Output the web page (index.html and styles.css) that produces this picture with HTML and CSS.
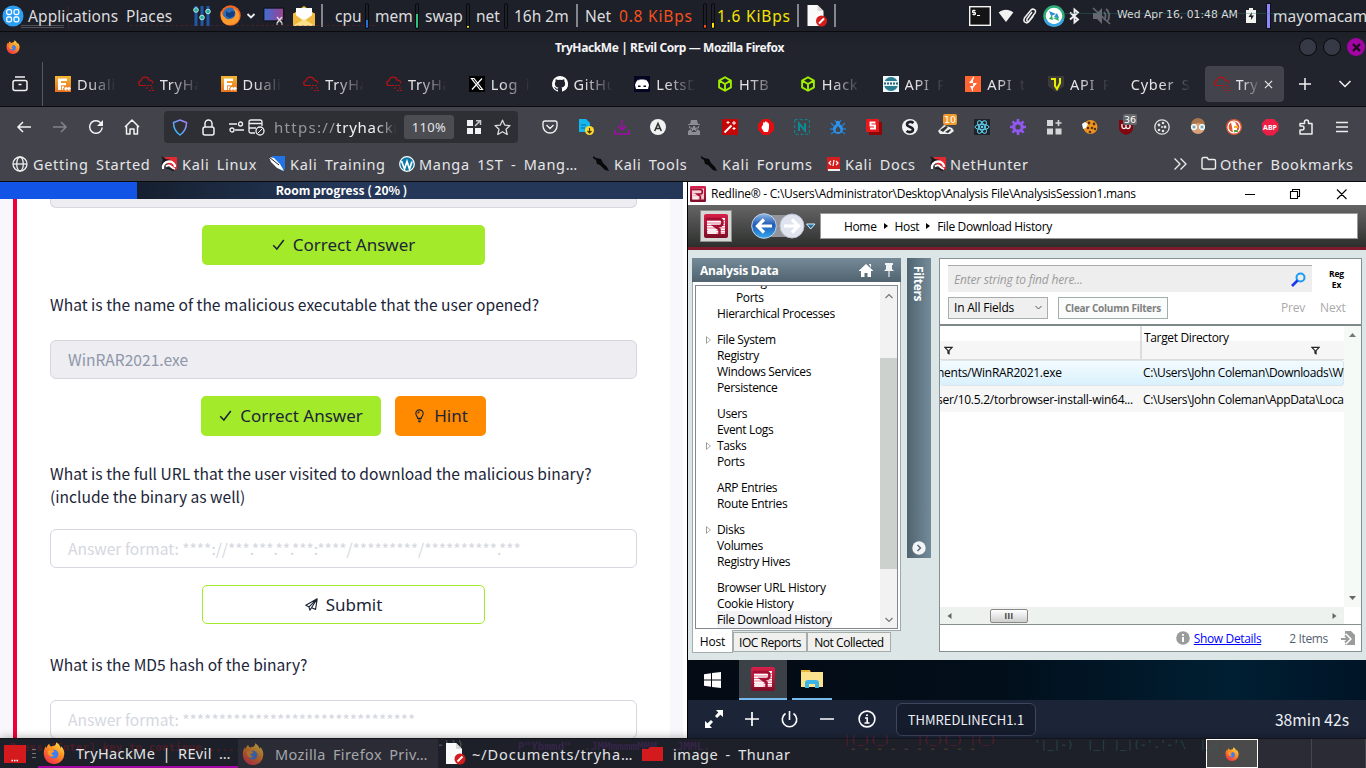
FILE: index.html
```html
<!DOCTYPE html>
<html lang="en">
<head>
<meta charset="utf-8">
<title>TryHackMe | REvil Corp — Mozilla Firefox</title>
<link rel="stylesheet" href="styles.css">
</head>
<body>
<svg class="defs" width="0" height="0">
  <defs>
    <linearGradient id="gFire" x1=".8" y1="0" x2=".2" y2="1"><stop offset="0" stop-color="#ffe14a"/><stop offset=".45" stop-color="#ff8a1f"/><stop offset="1" stop-color="#f2264d"/></linearGradient>
    <linearGradient id="gRed" x1="0" y1="0" x2="0" y2="1"><stop offset="0" stop-color="#d8204a"/><stop offset="1" stop-color="#7c0d26"/></linearGradient>
    <linearGradient id="gShield" x1="1" y1="0" x2="0" y2="1"><stop offset="0" stop-color="#b07cff"/><stop offset="1" stop-color="#22c3f5"/></linearGradient>
    <linearGradient id="gBlue" x1="0" y1="0" x2="0" y2="1"><stop offset="0" stop-color="#8fb6e6"/><stop offset=".45" stop-color="#1f5bb5"/><stop offset="1" stop-color="#35a8f0"/></linearGradient>
    <linearGradient id="gShot" x1="0" y1="0" x2="1" y2="0"><stop offset="0" stop-color="#3d6fd8"/><stop offset="1" stop-color="#a0408f"/></linearGradient>
    <linearGradient id="gOrange" x1="0" y1="0" x2="0" y2="1"><stop offset="0" stop-color="#f2b632"/><stop offset="1" stop-color="#e8701e"/></linearGradient>
  </defs>
  <symbol id="firefox" viewBox="0 0 16 16"><path fill="url(#gFire)" d="M8.6 2.6C9.4 1.8 9.6.9 9.5.2c2 1 3 2.600 3.200 4 .5-.2.6-.8.6-1.200C14.900 4.700 15.600 6.500 15.500 8.500a7.400 7.400 0 0 1-14.900.2C.500 6.500 1 4.600 2.100 3.100c.1.6.2.9.5 1.200C3 3 3.600 2 4.600 1.300c0 1 .5 1.700 1.400 2 .8-.1 1.700-.4 2.600-.7z"/><circle cx="8" cy="8.800" r="3.200" fill="#3e7df0"/><path fill="#ff9a2a" d="M3.500 6.500c1.500-1.500 3.500-.9 4.800.2-.6 1-1.500 1-2.200 1.400.2 1 1 1.800 2.300 1.700-1.800 1.600-4.900.8-4.900-3.300z"/></symbol>
  <symbol id="thm" viewBox="0 0 16 16"><path fill="none" stroke="#b31217" stroke-width="1.200" d="M8 9.500H3.200a2.300 2.300 0 0 1-.3-4.600C3.500 2.500 5.200 1.200 7.300 1.200c2 0 3.400 1.200 4 3 2 0 3.400 1.200 3.400 3"/><path stroke="#b31217" stroke-width="1.100" stroke-dasharray="2 1" d="M9 9.500h6M8 12h3M13 12h3M11 14.500h5"/></symbol>
  <symbol id="free" viewBox="0 0 16 16"><rect width="16" height="16" fill="url(#gOrange)"/><path fill="#fff" d="M3 2.500h9V5H6v2h5v2.300H6V14H3z"/><path fill="none" stroke="#fff" stroke-width="1.400" d="M7.500 14v-3h1.500M10 12.500h2a1 1 0 1 0-.5 1.200M13 12.500h2a1 1 0 1 0-.5 1.200"/></symbol>
  <symbol id="htb" viewBox="0 0 16 16"><path fill="none" stroke="#9fef00" stroke-width="1.900" stroke-linejoin="round" d="M8 1.200l5.900 3.400v6.800L8 14.800l-5.900-3.400V4.600zM2.200 4.700L8 8l5.800-3.300M8 8v6.500"/></symbol>
  <symbol id="kred" viewBox="0 0 16 16"><path fill="#e32a31" d="M4 1h12v12l-3 1L2 4z"/><path fill="#16181d" d="M0 0l5 3 5 1-6 3-3 5 1 3-2-3 1-6 1-2z"/><path fill="none" stroke="#fff" stroke-width="2.300" d="M2 13C1 9 4 5.500 8 5.500c4 0 6 3 6 5.500"/><path fill="none" stroke="#fff" stroke-width="1.800" d="M5 10.500c2-1.500 4-1 5 0s2 2 4 2.500"/><path fill="none" stroke="#16181d" stroke-width="1.500" d="M5 12.500c3-2 5 2 8 2"/></symbol>
  <symbol id="kblk" viewBox="0 0 16 16"><path fill="#08090b" d="M0 0l3 2 5 1 2 4 4 4 2 4-4-1-5-5-3-1-1-4-3-2z"/></symbol>
  <symbol id="R" viewBox="0 0 24 24"><rect width="24" height="24" rx="2" fill="url(#gRed)"/><path fill="#fff" d="M3 4h18v16H3z"/><path stroke="#e2607e" stroke-width=".9" d="M3 6.500h18M3 9h18M3 11.500h18M3 14h18M3 16.500h18M3 19h18"/><path fill="none" stroke="#a30f33" stroke-width="2.500" d="M2 5h13.500c4 0 4 7 0 7H10.500l5 3.500v5"/><path fill="#fbe9ed" d="M4 15.500h8.500V20H4z"/></symbol>
  <symbol id="check" viewBox="0 0 16 16"><path fill="none" stroke="#1c2538" stroke-width="1.900" d="M1.500 9l4.500 4.500 8.500-11"/></symbol>
  <symbol id="doc" viewBox="0 0 24 24"><path fill="#fafafa" d="M4 1h10l6 6v15H4z"/><path fill="#d9d9d9" d="M14 1l6 6h-6z"/><circle cx="18" cy="17" r="5.500" fill="#d41c1c"/><path stroke="#fff" stroke-width="2" d="M15.500 19.500l5-5"/></symbol>
  <symbol id="funnel" viewBox="0 0 10 10"><path fill="none" stroke="#222" stroke-width="1.300" d="M1 1.500h8L5.600 5.200v3.500L4.400 8V5.200z"/></symbol>
</svg>

<header class="panel">
  <i class="ghost g1"></i><i class="ghost g2"></i><i class="ghost g3"></i><i class="ghost g4"></i>
  <svg width="22" height="22" viewBox="0 0 22 22"><circle cx="11" cy="11" r="10.500" fill="#2a9df4"/><g fill="none" stroke="#fff" stroke-width="1.300"><rect x="4.700" y="4.700" width="4.800" height="4.800" rx="1.500"/><rect x="12" y="4.700" width="4.800" height="4.800" rx="1.500"/><rect x="4.700" y="12" width="4.800" height="4.800" rx="1.500"/><rect x="12" y="12" width="4.800" height="4.800" rx="1.500"/></g></svg>
  <span class="apps">Applications</span><span class="apps">Places</span>
  <svg width="18" height="20" viewBox="0 0 18 20"><path stroke="#1f58a8" stroke-width="3" d="M3 0v20M9 0v20M15 0v20"/><g fill="#1fb0a5" stroke="#bfe8e4"><circle cx="3" cy="4" r="2.300"/><circle cx="9" cy="11.500" r="2.300"/><circle cx="15" cy="5.500" r="2.300"/></g></svg>
  <svg width="21" height="21" viewBox="0 0 21 21"><circle cx="10.500" cy="10.500" r="10.200" fill="#f2661f"/><circle cx="10" cy="9.500" r="7" fill="#2f6fb8"/><path fill="#133d82" d="M6 6l3 2 3-2 3 1-1 4-4 2-4-2z"/><path fill="#ff9b2e" d="M1 5c1 5 2 6 6 9 5 1 7-2 8-3 1-3 0-6-2-8 6 2 8 8 5 13-4 5-12 5-15 1C1 14 0 9 1 5z"/></svg>
  <svg width="10" height="8" viewBox="0 0 10 8"><path fill="none" stroke="#eee" stroke-width="1.800" d="M1.500 2L5 5.500 8.500 2"/></svg>
  <svg width="22" height="20" viewBox="0 0 22 20"><rect x=".7" y="2" width="20" height="13" fill="url(#gShot)" stroke="#15161b" stroke-width="1.400"/><path stroke="#ddd" stroke-width="1.400" d="M14 11l5 6M19 11l-5 6"/><path stroke="#999" stroke-width="1.500" d="M13 18h2M18 18h2"/></svg>
  <svg width="22" height="22" viewBox="0 0 22 22"><path fill="#f4c34a" d="M0 9l11-8 11 8v12H0z"/><path fill="#fff" d="M3 3h16v10l-8 4-8-4z"/><path fill="#f0b93f" d="M0 8l11 8 11-8v12q0 1-1 1H1q-1 0-1-1z"/><path fill="#ffe08a" d="M0 21l11-7 11 7z"/></svg>
  <i class="sep"></i>
  <span>cpu</span><b class="m m1"></b><span>mem</span><b class="m m2"></b><span class="t-swap">swap</span><b class="m m3"></b><span>net</span><b class="m"></b>
  <span class="t-up">16h 2m</span><i class="sep"></i><span>Net</span><span class="o wide">0.8 KiBps</span><b class="m m4"></b><b class="m m5"></b><span class="y wide">1.6 KiBps</span><i class="sep"></i>
  <svg width="25" height="24"><use href="#doc"/></svg><i class="sep"></i>
  <svg width="22" height="20" viewBox="0 0 22 20"><rect x=".7" y=".7" width="20.600" height="18.600" fill="#141414" stroke="#f4f4f4" stroke-width="1.400"/><path fill="none" stroke="#fff" d="M6.500 4.500h-3v2h3v2h-3M5 3.500v6M8 9.500h3"/></svg>
  <svg width="16" height="16" viewBox="0 0 16 16"><path fill="#f2f2f2" d="M8 14L.7 4.500C5 .8 11 .8 15.300 4.500z"/></svg>
  <svg width="15" height="18" viewBox="0 0 15 18"><path fill="none" stroke="#f0f0f0" stroke-width="1.500" d="M10 5l-5 7c-1 2 1 3 2 2l6-8c2-3-2-5-4-3L2.500 11c-2 4 2 6 4 4l5-6"/></svg>
  <svg width="22" height="22" viewBox="0 0 22 22"><circle cx="11" cy="11" r="9.500" fill="#fff" stroke="#2fae7b" stroke-width="2.500"/><path fill="none" stroke="#3aa3e8" stroke-width="2.500" d="M2 14a9.500 9.500 0 0 0 18 0"/><path fill="#2a8cd8" d="M6 6l7 3-5 2zM11 12l3-4 2 5z"/><path fill="#2cae68" d="M16 16l-6-3 5-1zM6 14l3-4 1 5z"/></svg>
  <svg width="11" height="16" viewBox="0 0 11 16"><path fill="none" stroke="#f2f2f2" stroke-width="1.900" d="M1 4.500l8 7L5.500 14.500V1.500L9 4.500l-8 7"/></svg>
  <svg width="19" height="18" viewBox="0 0 19 18"><path fill="#666770" d="M1 6h4l5-5v16l-5-5H1z"/><path fill="none" stroke="#666770" stroke-width="1.700" d="M1 1l17 16M12 5c2 2 2 5 0 8M14 2c4 3 4 9 1 13"/></svg>
  <span class="clock">Wed Apr 16, 01:48 AM</span>
  <svg width="10" height="15" viewBox="0 0 10 15"><path fill="#f2f2ee" d="M3 0h4v2h3v13H0V2h3z"/><path fill="#1e2029" d="M6 4L2.500 9H5v3l3-4.500H5.500z"/></svg>
  <b class="purple"></b><span class="user">mayomacam</span>
</header>

<div class="title"><svg width="14" height="14"><use href="#firefox"/></svg><strong>TryHackMe | REvil Corp — Mozilla Firefox</strong>
  <div class="winbtns"><i></i><i></i><i class="x"><svg width="9" height="9" viewBox="0 0 9 9"><path stroke="#111" stroke-width="2.200" d="M1 1l7 7M8 1L1 8"/></svg></i></div></div>

<nav class="tabs">
  <div class="view"><svg width="16" height="16" viewBox="0 0 16 16"><path fill="none" stroke="#f2f2f4" stroke-width="1.500" d="M3 1h10M1 6.500q0-2 2-2h10q2 0 2 2v6q0 2-2 2H3q-2 0-2-2zM6.500 8.500h3"/></svg></div>
  <div class="tab"><svg><use href="#free"/></svg><span>Duality</span></div>
  <div class="tab"><svg><use href="#thm"/></svg><span>TryHack</span></div>
  <div class="tab"><svg><use href="#free"/></svg><span>Duality</span></div>
  <div class="tab"><svg><use href="#thm"/></svg><span>TryHack</span></div>
  <div class="tab"><svg><use href="#thm"/></svg><span>TryHack</span></div>
  <div class="tab"><svg viewBox="0 0 16 16"><rect width="16" height="16" fill="#000"/><path fill="none" stroke="#fff" stroke-width="1.200" d="M2.500 2.500H5L13.500 13.500H11zM13 2.500L3 13.500"/></svg><span>Log in</span></div>
  <div class="tab"><svg viewBox="0 0 16 16"><path fill="#fff" d="M8 0a8 8 0 0 0-2.500 15.600c.4.1.5-.2.500-.4v-1.500c-2.200.5-2.700-1-2.700-1-.4-.9-.9-1.200-.9-1.200-.7-.5.1-.5.1-.5.8.1 1.200.8 1.200.8.700 1.200 1.900.9 2.300.7.100-.5.300-.9.500-1.100-1.800-.2-3.600-.9-3.600-4 0-.9.300-1.600.8-2.100-.1-.2-.4-1 .1-2.100 0 0 .7-.2 2.200.8a7.500 7.500 0 0 1 4 0c1.500-1 2.200-.8 2.200-.8.400 1.100.2 1.900.1 2.100.5.600.8 1.300.8 2.100 0 3.100-1.900 3.700-3.700 3.900.300.300.600.800.600 1.500v2.400c0 .2.100.500.600.4A8 8 0 0 0 8 0z"/></svg><span>GitHub</span></div>
  <div class="tab"><svg viewBox="0 0 16 16"><rect width="16" height="16" fill="#050522"/><path fill="#fff" d="M1 9l1-3 1-1 1-1.500 1 1 1-1.500 1 1 1-1 1 1 1-1 1 1.500 1-1 1 1.500 1 1 1 3-1 4H2z"/><path fill="#050522" d="M4 9.500h2.500v1.500H4zM9.500 9.500H12V11H9.500z"/></svg><span>LetsDe</span></div>
  <div class="tab"><svg><use href="#htb"/></svg><span>HTB A</span></div>
  <div class="tab"><svg><use href="#htb"/></svg><span>Hack T</span></div>
  <div class="tab"><svg viewBox="0 0 16 16"><rect width="16" height="16" fill="#eef7f9"/><circle cx="8" cy="8" r="7" fill="#2a7d91"/><path fill="#e6f4f6" d="M0 5h16v5H0z"/><path stroke="#2a6074" stroke-width="2" stroke-dasharray="2 1" d="M1 7.500h14"/></svg><span>API P</span></div>
  <div class="tab"><svg viewBox="0 0 16 16"><rect width="16" height="16" fill="#ff6633"/><path fill="#fff" d="M9 0L4 7h4v3H5l3 6V12l4-5H8V4l1-2z"/></svg><span>API te</span></div>
  <div class="tab"><svg viewBox="0 0 16 16"><path fill="#3c3a38" d="M0 0h16v10l-8 6-8-6z"/><path fill="none" stroke="#e8f000" stroke-width="2" d="M3 3h4v7l2 3 3-6V2"/></svg><span>API P</span></div>
  <div class="tab noicon"><span>Cyber Se</span></div>
  <div class="tab active"><svg><use href="#thm"/></svg><span>TryH</span><svg class="close" viewBox="0 0 10 10"><path stroke="#eee" stroke-width="1.200" d="M1 1l8 8M9 1L1 9"/></svg></div>
  <div class="tabend"><svg width="12" height="12" viewBox="0 0 12 12"><path stroke="#f2f2f4" stroke-width="1.500" d="M6 0v12M0 6h12"/></svg><svg width="12" height="8" viewBox="0 0 12 8"><path fill="none" stroke="#f2f2f4" stroke-width="1.500" d="M.5 1L6 6.500 11.500 1"/></svg></div>
</nav>

<div class="toolbar">
  <div class="navb">
    <svg viewBox="0 0 16 16"><path fill="none" stroke="#f2f2f4" stroke-width="1.500" d="M15 8H2M7 3L2 8l5 5"/></svg>
    <svg viewBox="0 0 16 16"><path fill="none" stroke="#83848a" stroke-width="1.500" d="M1 8h13M9 3l5 5-5 5"/></svg>
    <svg viewBox="0 0 16 16"><path fill="none" stroke="#f2f2f4" stroke-width="1.500" d="M14.200 8.500A6.300 6.300 0 1 1 11 2.500l2.500 2"/><path fill="#f2f2f4" d="M15 1v6H9z"/></svg>
    <svg viewBox="0 0 16 16"><path fill="none" stroke="#f2f2f4" stroke-width="1.500" stroke-linejoin="round" d="M1 8l7-7 7 7M2.500 7v8H6v-5h4v5h3.500V7"/></svg>
  </div>
  <div class="url">
    <svg width="16" height="17" viewBox="0 0 16 17"><path fill="none" stroke="url(#gShield)" stroke-width="1.500" d="M8 1l6.500 2.500c0 6-2 9.500-6.500 12.500C3.500 13 1.500 9.500 1.500 3.500z"/></svg>
    <svg width="13" height="17" viewBox="0 0 13 17"><path fill="none" stroke="#f0f0f2" stroke-width="1.500" d="M3 8V4.500a3.500 3.500 0 0 1 7 0V8M1 10q0-2 2-2h7q2 0 2 2v4q0 2-2 2H3q-2 0-2-2z"/></svg>
    <svg width="15" height="12" viewBox="0 0 15 12"><path fill="none" stroke="#f0f0f2" stroke-width="1.400" d="M0 3h8M6 9h9"/><circle cx="11.500" cy="3" r="2" fill="none" stroke="#f0f0f2" stroke-width="1.300"/><circle cx="3" cy="9" r="2" fill="none" stroke="#f0f0f2" stroke-width="1.300"/></svg>
    <svg width="17" height="17" viewBox="0 0 17 17"><path fill="none" stroke="#f0f0f2" stroke-width="1.300" d="M7 14H3q-2 0-2-2V3q0-2 2-2h9q2 0 2 2v4M1 4.500h13M1 9h7"/><circle cx="12" cy="12" r="4" fill="none" stroke="#f0f0f2" stroke-width="1.300"/><path stroke="#f0f0f2" d="M9.500 14.500l5-5"/></svg>
    <span class="addr"><em>https://</em>tryhackme</span>
    <span class="zoomlvl">110%</span>
    <svg width="16" height="16" viewBox="0 0 16 16"><path fill="#f2f2f4" d="M1 1h6v6H1zM1 9h6v6H1zM9 9h6v6H9z"/><path fill="none" stroke="#c9c9cc" stroke-width="1.500" d="M9 7l5-5M10 1.700h4.500V6"/></svg>
    <svg width="17" height="17" viewBox="0 0 17 17"><path fill="none" stroke="#ddd" stroke-width="1.300" stroke-linejoin="round" d="M8.500 1.200l2.200 4.900 5.300.5-4 3.600 1.200 5.300-4.700-2.800-4.700 2.800L5 10.200 1 6.600l5.300-.5z"/></svg>
  </div>
  <div class="ext">
    <svg viewBox="0 0 16 16"><path fill="none" stroke="#eee" stroke-width="1.400" d="M3 2h10q2 0 2 2v3a7 7 0 0 1-14 0V4q0-2 2-2zM4.500 6L8 9.500 11.500 6"/></svg>
    <svg viewBox="0 0 16 16"><path fill="#15b6ee" d="M1 0h7l4 4v9H1z"/><path stroke="#066a9e" d="M3 6h5M3 9h4"/><circle cx="11.500" cy="11.500" r="4.500" fill="#ffd92e"/><path fill="none" stroke="#453600" stroke-width="1.200" d="M11.500 9v5M9.500 12l2 2 2-2"/></svg>
    <svg viewBox="0 0 16 16"><path fill="none" stroke="#a50aaa" stroke-width="1.500" d="M8 1v10M4 7l4 4 4-4M1 11v4h14v-4"/></svg>
    <svg viewBox="0 0 16 16"><circle cx="8" cy="8" r="8" fill="#f2f2f2"/><path fill="none" stroke="#333" stroke-width="1.600" d="M4.700 12L8 4.500 11.300 12M6 9.500h4"/></svg>
    <svg viewBox="0 0 16 16"><path fill="#8d8e93" d="M5 1h6l1 4h2v1H2V5h2zM3 7h10v2l-3 1v2H6v-2L3 9zM2 16v-4l3-2 1 3h4l1-3 3 2v4z"/><path fill="#42434b" d="M4 7h3v1.500H4zM9 7h3v1.500H9zM7 11h2v2H7z"/></svg>
    <svg viewBox="0 0 16 16"><rect width="16" height="16" fill="#c40606"/><path stroke="#fff" stroke-width="2" d="M2.500 13.500l7-7"/><path stroke="#fff" d="M6 2v3M4.500 3.500h3M12 2v4M10 4h4M12 8v3M10.500 9.500h3"/></svg>
    <svg viewBox="0 0 16 16"><path fill="#e30d12" d="M5 0h6l5 5v6l-5 5H5l-5-5V5z"/><path fill="#fff" d="M4 7l1-1V4l1-1 1 1V2.500h1.200V3l1.300-.3V4l1.500.5V9L10 13H6L3.500 9z"/></svg>
    <svg viewBox="0 0 16 16"><rect x=".7" y=".7" width="14.600" height="14.600" fill="none" stroke="#0d8b95" stroke-dasharray="3 2"/><path fill="none" stroke="#0d8b95" stroke-width="2" d="M5 12V4.500l6 7V4"/></svg>
    <svg viewBox="0 0 16 16"><path stroke="#1f7fd6" stroke-width="1.300" d="M1 4l3 3M15 4l-3 3M0 10h16M1 15l4-3M15 15l-4-3M5 1l2 3M11 1L9 4"/><circle cx="8" cy="10" r="5" fill="#2d91ea"/><circle cx="8" cy="4" r="2.200" fill="#2d91ea"/><path fill="#42434b" d="M8 7q4 4 1.500 6h-3Q4 11 8 7z"/></svg>
    <svg viewBox="0 0 16 16"><path fill="#8c0707" d="M3 3h13v13H3z"/><rect width="13" height="13" fill="#e8191e"/><path fill="none" stroke="#fff" stroke-width="1.900" d="M9.500 3.500h-5v3h4.500v3h-5"/></svg>
    <svg viewBox="0 0 16 16"><circle cx="8" cy="8" r="8" fill="#f4f4f4"/><path fill="none" stroke="#1e2029" stroke-width="2.600" d="M11.500 4C9 2 5 3 5 5.500S11 8 11 10.500 7 14 4.500 12"/></svg>
    <div class="badged"><svg viewBox="0 0 16 16"><path fill="#eee" d="M0 12l6-6 8 3 2 3-4 3H2z"/><path fill="#333" d="M2 11l6-4 2 1-5 5zM7 13l5-3 1 1-3 3z"/></svg><b class="o10">10</b></div>
    <svg viewBox="0 0 16 16"><rect width="16" height="16" fill="#1f2328"/><g fill="none" stroke="#5fd4f4"><ellipse cx="8" cy="8" rx="7" ry="2.700"/><ellipse cx="8" cy="8" rx="7" ry="2.700" transform="rotate(60 8 8)"/><ellipse cx="8" cy="8" rx="7" ry="2.700" transform="rotate(120 8 8)"/></g><circle cx="8" cy="8" r="1.300" fill="#5fd4f4"/></svg>
    <svg viewBox="0 0 16 16"><circle cx="8" cy="8" r="4.200" fill="none" stroke="#9157ef" stroke-width="3.200"/><path stroke="#9157ef" stroke-width="2.600" d="M8 0v3M8 13v3M0 8h3M13 8h3M2.400 2.400l2 2M11.600 11.600l2 2M13.600 2.400l-2 2M4.400 11.600l-2 2"/></svg>
    <svg viewBox="0 0 16 16"><path fill="#d6d6d8" d="M1 1h6v6H1zM1 9.500h6v6H1zM9.500 9.500h6v6h-6zM11.700 1h1.600v2.200h2.200v1.600h-2.200V7h-1.600V4.800H9.500V3.200h2.200z"/></svg>
    <svg viewBox="0 0 16 16"><circle cx="8.500" cy="8" r="7" fill="#ee9422"/><path fill="#fff" d="M0 5l3-2 3 2-2 4-3 1z"/><g fill="#5a3205"><circle cx="7" cy="4" r="1.400"/><circle cx="12" cy="5" r="1.400"/><circle cx="6" cy="9" r="1.300"/><circle cx="10" cy="9" r="1.300"/><circle cx="8" cy="13" r="1.300"/><circle cx="13" cy="10" r="1.200"/></g></svg>
    <div class="badged"><svg viewBox="0 0 16 16"><path fill="#800610" d="M1 1l14 0v8c0 4-4 6-7 7-3-1-7-3-7-7z"/><path fill="none" stroke="#fff" stroke-width="1.300" d="M4 5v3q0 1.500 2 1.500T8 8V5m0 3q0 1.500 2 1.500T12 8V6"/></svg><b class="g36">36</b></div>
    <svg viewBox="0 0 16 16"><circle cx="8" cy="8" r="7.200" fill="none" stroke="#e2e2e4" stroke-width="1.300"/><g fill="#e2e2e4"><circle cx="5" cy="6" r="1.400"/><circle cx="9" cy="4" r="1.300"/><circle cx="11" cy="8" r="1.400"/><circle cx="5" cy="11" r="1.300"/><circle cx="9" cy="12" r="1.300"/><circle cx="8" cy="8" r="1"/></g></svg>
    <svg viewBox="0 0 16 16"><circle cx="8" cy="8" r="7" fill="#d9a27c"/><path fill="#a8764a" d="M1 6a7 7 0 0 1 14 0l-7-2z"/><g fill="#b8e0e8" stroke="#fff"><circle cx="4" cy="8" r="2.700"/><circle cx="12" cy="8" r="2.700"/></g><path stroke="#333" stroke-width="1.300" d="M3.500 8h1M11.500 8h1"/></svg>
    <svg viewBox="0 0 16 16"><circle cx="8" cy="8" r="8" fill="#de5833"/><circle cx="8" cy="8" r="6" fill="none" stroke="#fff" stroke-width="1.200"/><path fill="#fff" d="M5 3h4l2 4v5l-4 2-1-6z"/><path fill="#f9b52b" d="M8 7h4v2H8z"/><path fill="#53a640" d="M8 11h4v2H8z"/></svg>
    <span class="abp">ABP</span>
    <svg viewBox="0 0 16 16"><path fill="none" stroke="#eee" stroke-width="1.500" stroke-linejoin="round" d="M2 15v-4h2a2 2 0 0 0 0-4H2V4.500h4.500V3a2 2 0 0 1 4 0v1.500H14V15z"/></svg>
    <svg viewBox="0 0 16 16"><path stroke="#eee" stroke-width="1.400" d="M2 3.500h12M2 8h12M2 12.500h12"/></svg>
  </div>
</div>

<div class="bookmarks">
  <svg viewBox="0 0 16 16"><g fill="none" stroke="#eee" stroke-width="1.300"><circle cx="8" cy="8" r="7"/><ellipse cx="8" cy="8" rx="3.300" ry="7"/><path d="M1 8h14"/></g></svg><span>Getting Started</span>
  <svg><use href="#kred"/></svg><span>Kali Linux</span>
  <svg viewBox="0 0 16 16"><path fill="#2273e6" d="M3 0h13v13l-3 2L2 5z"/><path fill="#fff" d="M0 1l5 1 6 6 4 7-7-3-6-6z"/><path stroke="#222" d="M0 1l10 8"/></svg><span>Kali Training</span>
  <svg viewBox="0 0 16 16"><circle cx="8" cy="8" r="7.300" fill="#0b78a8" stroke="#fff" stroke-width="1.200"/><path fill="none" stroke="#fff" stroke-width="1.700" d="M2.500 5l3 8L8 5.500 10.500 13l2.500-7.500"/></svg><span>Manga 1ST - Mang…</span>
  <svg><use href="#kblk"/></svg><span>Kali Tools</span>
  <svg><use href="#kblk"/></svg><span>Kali Forums</span>
  <svg viewBox="0 0 16 16"><path fill="#d61d1d" d="M1 1h13v14H1z"/><path fill="#eee" d="M2 13h12v2H2z"/><path fill="none" stroke="#fff" stroke-width="1.200" d="M5 5L3 7l2 2M10 5l2 2-2 2M8 4L7 10"/></svg><span>Kali Docs</span>
  <svg><use href="#kred"/></svg><span>NetHunter</span>
  <svg viewBox="0 0 16 16"><path fill="none" stroke="#eee" stroke-width="1.300" d="M1.500 2.500L7 8l-5.500 5.500M7.500 2.500L13 8l-5.500 5.500"/></svg>
  <svg viewBox="0 0 16 16"><path fill="none" stroke="#eee" stroke-width="1.400" d="M1 3q0-1.500 1.500-1.500H6L7.500 3.500H13q1.500 0 1.500 1.500v6.500q0 1.500-1.500 1.500H2.500Q1 13 1 11.500z"/></svg><span>Other Bookmarks</span>
</div>

<main>
  <section class="room">
    <div class="progress"><div class="bar"></div><span>Room progress ( 20% )</span></div>
    <div class="task">
      <div class="inp done first"></div>
      <div class="btns"><span class="btn ok long"><svg><use href="#check"/></svg>Correct Answer</span></div>
      <p class="q1">What is the name of the malicious executable that the user opened?</p>
      <div class="inp done">WinRAR2021.exe</div>
      <div class="btns"><span class="btn ok">
        <svg><use href="#check"/></svg>Correct Answer</span><span class="btn hint"><svg viewBox="0 0 16 16"><path fill="none" stroke="#1c2538" stroke-width="1.400" d="M5.800 11.500c0-2-2.300-3-2.300-6a4.500 4.500 0 0 1 9 0c0 3-2.300 4-2.300 6zM6 13.500h4M6.500 15.500h3M6 5.500q0-2 2-2"/></svg>Hint</span></div>
      <p class="q2">What is the full URL that the user visited to download the malicious binary?<br>(include the binary as well)</p>
      <div class="inp">Answer format: <span class="stars1">****://***.***.**.***:****/*********/**********.***</span></div>
      <div class="btns"><span class="btn submit"><svg viewBox="0 0 16 16"><path fill="none" stroke="#1c2538" stroke-width="1.400" stroke-linejoin="round" d="M15 1L1 9l4 2 10-10-2 13-5-2-2 3-1-4M8 12l7-11"/></svg>Submit</span></div>
      <p class="q3">What is the MD5 hash of the binary?</p>
      <div class="inp last">Answer format: <span class="stars2">********************************</span></div>
    </div>
  </section>

  <section class="vm">
    <div class="wtitle"><svg width="16" height="16"><use href="#R"/></svg><span>Redline® - C:\Users\Administrator\Desktop\Analysis File\AnalysisSession1.mans</span>
      <svg class="wc" width="104" height="12" viewBox="0 0 104 12"><path fill="none" stroke="#000" stroke-width="1.100" d="M1 6.500h10M46.500 3.500h7v7h-7zM48.500 3.500v-2h7v7h-2M93 1.500l9.500 9.500M102.500 1.500L93 11"/></svg></div>
    <div class="whead">
      <div class="logo"><svg width="24" height="24"><use href="#R"/></svg></div>
      <svg width="66" height="28" viewBox="0 0 66 28"><path fill="#93959a" d="M13 3h30v22H13z"/><circle cx="14" cy="14" r="12.300" fill="url(#gBlue)" stroke="#c5d3e4"/><circle cx="42" cy="14" r="12" fill="#dfe4ef" stroke="#b9bfca"/><path fill="none" stroke="#fff" stroke-width="3.200" d="M22 14H8M14 7.500L7.500 14l6.500 6.500M34 14h14M42 7.500l6.500 6.500-6.500 6.500"/><path fill="#1e6fa5" stroke="#d9f1ff" d="M56.500 12h8.500l-4.300 5z"/></svg>
      <div class="crumbs"><span>Home</span><i></i><span>Host</span><i></i><span>File Download History</span></div>
    </div>
    <div class="wbody">
      <div class="side">
        <div class="shead"><b>Analysis Data</b><svg width="16" height="15" viewBox="0 0 16 15"><path fill="#fff" d="M8 1l7.500 7H13v6H9.500v-4h-3v4H3V8H.5zM11 1h2v4z"/></svg><svg width="10" height="14" viewBox="0 0 10 14"><path fill="#f0f2f4" d="M1 0h8v2H8v4l2 2H0l2-2V2H1z"/><path stroke="#f0f2f4" stroke-width="1.200" d="M5 8v6"/></svg></div>
        <div class="sbody"><div class="list">
          <div class="tree">
            <p class="cut in">Strings</p><p class="in">Ports</p><p>Hierarchical Processes</p>
            <p class="gap ar">File System</p><p>Registry</p><p>Windows Services</p><p>Persistence</p>
            <p class="gap">Users</p><p>Event Logs</p><p class="ar">Tasks</p><p>Ports</p>
            <p class="gap">ARP Entries</p><p>Route Entries</p>
            <p class="gap ar">Disks</p><p>Volumes</p><p>Registry Hives</p>
            <p class="gap">Browser URL History</p><p>Cookie History</p><p><span class="sel">File Download History</span></p>
          </div>
          <div class="sb"><svg width="8" height="6" viewBox="0 0 8 6"><path fill="none" stroke="#777" stroke-width="1.200" d="M.5 5L4 1.500 7.500 5"/></svg><i></i><svg width="8" height="6" viewBox="0 0 8 6"><path fill="none" stroke="#777" stroke-width="1.200" d="M.5 1L4 4.500 7.500 1"/></svg></div>
        </div></div>
        <div class="stabs"><span class="on">Host</span><span class="t2">IOC Reports</span><span class="t3">Not Collected</span></div>
      </div>
      <div class="filters"><b>Filters</b><svg width="14" height="14" viewBox="0 0 14 14"><circle cx="7" cy="7" r="6.700" fill="#f3f5f6"/><path fill="none" stroke="#56656f" stroke-width="1.400" d="M5.500 4l3 3-3 3"/></svg></div>
      <div class="grid">
        <div class="find"><div class="search"><em>Enter string to find here...</em><svg width="15" height="15" viewBox="0 0 15 15"><circle cx="9.500" cy="5.500" r="4" fill="none" stroke="#1a9bf5" stroke-width="2"/><path stroke="#1c35ee" stroke-width="2.600" d="M6.500 8.500L1 14"/></svg></div><b>Reg<br>Ex</b></div>
        <div class="opts"><span class="combo">In All Fields<svg width="7" height="5" viewBox="0 0 7 5"><path fill="none" stroke="#555" d="M.5 1l3 3 3-3"/></svg></span><span class="clear">Clear Column Filters</span><span class="prev">Prev</span><span class="next">Next</span></div>
        <div class="table">
          <div class="cols">
            <div class="th"><div class="c1"><svg width="9" height="9"><use href="#funnel"/></svg></div><div class="c2"><span>Target Directory</span><svg width="9" height="9"><use href="#funnel"/></svg></div></div>
            <div class="tr r1"><div>nents/WinRAR2021.exe</div><div>C:\Users\John Coleman\Downloads\WinRAR</div></div>
            <div class="tr r2"><div>ser/10.5.2/torbrowser-install-win64...</div><div>C:\Users\John Coleman\AppData\Local</div></div>
            <div class="hs"><svg width="5" height="6" viewBox="0 0 5 6"><path fill="#666" d="M4.500 0v6L.5 3z"/></svg><i>III</i><svg width="5" height="6" viewBox="0 0 5 6"><path fill="#666" d="M.5 0v6l4-3z"/></svg></div>
          </div>
          <div class="vs"><svg width="7" height="4" viewBox="0 0 7 4"><path fill="#777" d="M0 4h7L3.500 0z"/></svg><svg width="7" height="4" viewBox="0 0 7 4"><path fill="#666" d="M0 0h7L3.500 4z"/></svg></div>
        </div>
        <div class="foot"><svg width="14" height="14" viewBox="0 0 14 14"><circle cx="7" cy="7" r="6.800" fill="#9a9c9b"/><path stroke="#fff" stroke-width="2" d="M7 6v5M7 3v1.800"/></svg><u>Show Details</u><span>2 Items</span><svg width="14" height="14" viewBox="0 0 14 14"><path fill="#9a9c9b" d="M4 0h6l4 4v10H4z"/><path fill="none" stroke="#fff" stroke-width="3.500" d="M0 8h7M4 3.500L8.500 8 4 12.500"/><path fill="none" stroke="#9a9c9b" stroke-width="2" d="M0 8h7M4 4.500L7.500 8 4 11.500"/></svg></div>
      </div>
    </div>
    <div class="wtask">
      <div class="start"><svg width="17" height="16" viewBox="0 0 17 16"><path fill="#fff" d="M0 2.200L7 1.200V7.500H0zM8 1l9-1v7.500H8zM0 8.500h7v6.300L0 13.800zM8 8.500h9V16l-9-1z"/></svg></div>
      <div class="cur"><svg width="24" height="24"><use href="#R"/></svg></div>
      <div class="exp"><svg width="22" height="18" viewBox="0 0 22 18"><path fill="#e8b53a" d="M0 0h9l1 3H0z"/><path fill="#fbe38e" d="M0 2h22v15H0z"/><path fill="#3bb4ea" d="M4 18v-5q0-3 3-3h8q3 0 3 3v5h-4v-4H8v4z"/></svg></div>
    </div>
    <div class="thm">
      <svg width="18" height="18" viewBox="0 0 18 18"><path fill="#fff" d="M11 0h7v7l-2.500-2.300-3.500 3.300L10 6l3.300-3.500zM0 11l2.500 2.300L6 10l2 2-3.300 3.500L7 18H0z"/></svg>
      <svg width="14" height="14" viewBox="0 0 14 14"><path stroke="#fff" stroke-width="1.700" d="M7 0v14M0 7h14"/></svg>
      <svg width="17" height="17" viewBox="0 0 17 17"><path fill="none" stroke="#fff" stroke-width="1.600" d="M4.500 2.500a7.200 7.200 0 1 0 8 0M8.500 0v9"/></svg>
      <svg width="14" height="14" viewBox="0 0 14 14"><path stroke="#fff" stroke-width="1.500" d="M0 7h14"/></svg>
      <svg width="18" height="18" viewBox="0 0 18 18"><circle cx="9" cy="9" r="7.900" fill="none" stroke="#fff" stroke-width="1.600"/><path fill="none" stroke="#fff" stroke-width="1.600" d="M7 8h2.200v5M6.500 13h5M8 5.200h2"/></svg>
      <span class="host">THMREDLINECH1.1</span><span class="time">38min 42s</span>
    </div>
  </section>
</main>

<footer>
  <span class="art a1">Press [Enter] key to continue ...............</span><span class="art a2">jgs (((---'&nbsp;&nbsp;&nbsp;&nbsp;'---)))</span><span class="art a3">P"Ybmmd"&nbsp;&nbsp;.JMMmmmmMMM&nbsp;&nbsp;.JMML.</span><span class="art a4">|(_)(_)&nbsp;&nbsp;&nbsp;&nbsp;|(_)(_) |(_)</span><span class="art a5">'|_|-)&nbsp;&nbsp;|_| |_|(-'.'-'\&nbsp;&nbsp;|_|</span><span class="art a6">- - - - - - - - - -</span>
  <svg width="25" height="24" viewBox="0 0 25 24"><path fill="#d41a1d" d="M2 3h22v18H2z"/><path stroke="#fff" stroke-width="1.500" stroke-dasharray="1.500 1" d="M9.500 18.500h7"/></svg>
  <svg width="5" height="12" viewBox="0 0 5 12"><path stroke="#777" d="M0 1.500h4M0 5.500h4M0 9.500h4"/></svg>
  <div class="item cur"><svg width="22" height="22"><use href="#firefox"/></svg><span>TryHackMe | REvil …</span></div>
  <div class="item dim"><svg width="22" height="22"><use href="#firefox"/></svg><span>Mozilla Firefox Priv…</span></div>
  <div class="item docs"><svg width="24" height="24"><use href="#doc"/></svg><span>~/Documents/tryha…</span></div>
  <div class="item thunar"><svg width="22" height="18" viewBox="0 0 22 18"><path fill="#d41a1d" d="M0 4h6l2-2h13v14H0z"/></svg><span>image - Thunar</span></div>
  <div class="ws"><i class="on"><svg width="14" height="14"><use href="#firefox"/></svg></i><i></i><i></i></div>
</footer>
</body>
</html>
```
FILE: styles.css
```css
* { box-sizing: border-box; }
body { margin: 0; width: 1366px; height: 768px; overflow: hidden; display: flex; flex-direction: column; background: #1e2029; font-family: "Noto Sans", sans-serif; font-size: 14px; color: #e4e4e6; }
svg { display: block; flex: none; overflow: visible; }
svg.defs { position: absolute; }
span, b, strong, u, em { white-space: nowrap; }
i, .search em { font-style: normal; }

/* desktop panel */
.panel { position: relative; height: 32px; flex: none; display: grid; align-items: center; border-bottom: 1px solid #0b0b0e; background: #1e2029; font-size: 15.500px; color: #dcdcde;
  grid-template-columns: 26px 98px 67px 27px 26px 17px 30px 28px 14px 30px 10px 40px 10px 41px 10px 28px 10px 62px 9px 34px 84px 8px 6px 80px 6px 31px 135px 29px 24px 21px 26px 23px 25px 129px 20px 7px 93px; padding-left: 2px; }
.panel .ghost { position: absolute; opacity: .35; height: 1px; background: #8a2630; }
.panel .g1 { left: 21px; top: 25px; width: 43px; height: 3px; background: none; border-top: 1px solid #aaa; border-bottom: 1px solid #aaa; }
.panel .g2 { left: 130px; top: 25px; width: 245px; background: none; border-top: 1px dashed #8a2630; }
.panel .g3 { left: 1062px; top: 13px; width: 245px; background: #2c7a70; }
.panel .g4 { left: 68px; top: 6px; width: 1px; height: 23px; }
.apps { letter-spacing: .1px; }
.wide { letter-spacing: .8px; }
.sep { width: 2px; height: 23px; background: #85868b; justify-self: start; }
.m { width: 4px; height: 26px; border-radius: 2px; border: 1px solid #090a0c; display: flex; align-items: flex-end; }
.m1 { background: linear-gradient(transparent 66%, #2372e0 66%); }
.m2 { background: linear-gradient(transparent 42%, #2ec27e 42%); }
.m3 { background: linear-gradient(transparent 92%, #ffe500 92%); }
.m4 { background: linear-gradient(transparent 88%, #ff4a10 88%); }
.m5 { background: linear-gradient(transparent 80%, #ffe500 80%); }
.o { color: #f4511c; } .y { color: #f5e400; }
.clock { font: 10.800px "DejaVu Sans", sans-serif; margin-bottom: 3px; }
.purple { width: 5px; height: 26px; background: #8e86ff; border: 1px solid #111; }

.title { height: 30px; flex: none; display: flex; align-items: center; justify-content: space-between; padding: 0 1px 0 6px; background: linear-gradient(#1e2028, #22242d 50%); }
.title strong { font: bold 12px "Noto Sans", sans-serif; letter-spacing: -.4px; color: #f4f4f5; }
.title > svg { margin-right: 20px; }
.winbtns { display: flex; gap: 6px; }
.winbtns i { width: 18px; height: 18px; border-radius: 50%; background: #363946; border: 1px solid #08080a; display: flex; align-items: center; justify-content: center; }
.winbtns .x { background: #a504a5; border: 0; }

.tabs { height: 45px; flex: none; display: flex; align-items: center; background: #22242d; border-bottom: 1px solid #0c0c0f; }
.view { width: 43px; height: 44px; padding: 14px 12px; border-right: 1px solid #55565d; margin-right: 3px; }
.tab { width: 82.750px; flex: none; height: 36px; display: flex; align-items: center; padding-left: 9px; font-size: 14.500px; letter-spacing: .75px; word-spacing: 3px; }
.tab svg { width: 16px; height: 16px; margin-right: 6px; }
.tab span { width: 39px; overflow: hidden; -webkit-mask-image: linear-gradient(90deg, #000 25%, transparent 100%); mask-image: linear-gradient(90deg, #000 25%, transparent 100%); }
.tab.noicon span { width: 60px; -webkit-mask-image: linear-gradient(90deg, #000 50%, transparent 100%); mask-image: linear-gradient(90deg, #000 50%, transparent 100%); }
.tab.active { width: 79px; background: #42434b; border-radius: 4px; }
.tab.active span { width: 25px; }
.tab .close { width: 9px; height: 9px; margin: 0 0 0 3px; }
.tabend { display: flex; align-items: center; gap: 28px; margin-left: 15px; }

.toolbar { height: 41px; flex: none; display: flex; align-items: center; background: #42434b; padding-bottom: 1px; }
.navb { width: 164px; display: flex; gap: 20px; padding-left: 16px; }
.navb svg { width: 16px; height: 16px; }
.url { width: 354px; height: 32px; background: #2e2f34; border-radius: 4px; display: flex; align-items: center; padding-left: 8px; }
.url > svg:nth-child(2) { margin-left: 14px; }
.url > svg:nth-child(3) { margin-left: 14px; }
.url > svg:nth-child(4) { margin-left: 4px; }
.addr { width: 125px; margin-left: 9px; overflow: hidden; font-size: 15px; letter-spacing: .75px; color: #f0f0f2; -webkit-mask-image: linear-gradient(90deg, #000 82%, transparent 98%); mask-image: linear-gradient(90deg, #000 82%, transparent 98%); }
.addr em { font-style: normal; color: #96979c; letter-spacing: 1.300px; }
.zoomlvl { width: 50px; height: 24px; background: #4c4d53; border-radius: 3px; text-align: center; line-height: 24px; font-size: 13px; letter-spacing: .3px; margin: 0 12px 0 5px; }
.url > svg:last-child { margin-left: 12px; }
.ext { display: grid; grid-template-columns: repeat(23, 36px); justify-items: center; align-items: center; padding-left: 14px; }
.ext svg { width: 16px; height: 16px; }
.badged { position: relative; }
.badged b { position: absolute; left: 5px; top: -5px; font: 9.500px/11px "DejaVu Sans", sans-serif; padding: 0 1px; border-radius: 2px; color: #fff; background: #f19a2e; }
.badged .g36 { background: #66686c; }
.abp { width: 17px; height: 17px; line-height: 17px; text-align: center; font-size: 7px; font-weight: bold; color: #fff; background: #ed1e45; clip-path: polygon(30% 0, 70% 0, 100% 30%, 100% 70%, 70% 100%, 30% 100%, 0 70%, 0 30%); }

.bookmarks { height: 34px; flex: none; display: grid; align-items: center; background: #42434b; border-bottom: 1px solid #0a0a0c; padding: 0 0 2px 12px; font-size: 14.500px; letter-spacing: .68px; word-spacing: 3px; color: #e6e6e8;
  grid-template-columns: 21px 128px 21px 87px 21px 109px 20px 174px 21px 87px 21px 104px 19px 85px 20px 223px 28px 19px 140px; }
.bookmarks svg { width: 16px; height: 16px; }

main { height: 556px; flex: none; display: flex; background: #fff; }
/* room */
.room { width: 687px; font-family: "Noto Sans CJK SC", sans-serif; color: #1c2538; display: flex; flex-direction: column; overflow: hidden; }
.progress { width: 683px; height: 17px; flex: none; background: linear-gradient(90deg, #151f2f 20%, #243758 50%); position: relative; text-align: center; font: bold 12px/15px "Noto Sans CJK SC", sans-serif; color: #fff; }
.progress .bar { position: absolute; left: 0; top: 0; width: 20%; height: 100%; background: #1255e6; }
.task { flex: 1; width: 683px; padding: 0 33px 0 33px; border-left: 13px solid #f8f8fc; border-right: 13px solid #f8f8fc; background: linear-gradient(90deg, #ef0038 4px, #fff 4px); }
.task p { margin: 0; font-size: 15.600px; line-height: 23px; white-space: nowrap; }
.inp { width: 587px; height: 39px; border: 1px solid #d4d6e0; border-radius: 6px; padding-left: 17px; line-height: 37px; font-size: 15.600px; color: #d5d7e1; white-space: nowrap; background: #fff; }
.inp, .task p, .btns { margin-left: 4px; }
.inp.done { background: #ededf2; color: #8f97a9; }
.inp.first { height: 9px; border-top: 0; border-radius: 0 0 6px 6px; }
.btns { width: 587px; display: flex; justify-content: center; gap: 14px; margin-top: 17px; }
.btn { height: 40px; width: 180px; padding-bottom: 2px; border-radius: 5px; display: flex; align-items: center; justify-content: center; gap: 8px; font: 17px "Noto Sans", sans-serif; color: #1c2538; }
.btn svg { width: 13px; height: 13px; }
.ok { background: #a3ea2a; }
.long { width: 283px; }
.hint { width: 91px; background: #ff8a00; }
.submit { width: 283px; height: 39px; padding-bottom: 0; background: #fff; border: 1px solid #a3ea2a; }
.task .q1 { margin-top: 28px; margin-bottom: 24px; }
.task .q2 { margin-top: 26px; margin-bottom: 21px; }
.task .q3 { margin-top: 29px; margin-bottom: 24px; }

/* remote desktop */
.vm { flex: 1; border-left: 1px solid #000; display: flex; flex-direction: column; font-family: "Open Sans", sans-serif; font-size: 12px; color: #000; letter-spacing: -.35px; }
.wtitle { height: 23px; flex: none; background: #fff; display: flex; align-items: center; padding-left: 2px; gap: 5px; letter-spacing: -.27px; }
.wc { margin-left: auto; margin-right: 18px; }
.whead { height: 45px; flex: none; background: linear-gradient(#656565, #2d2f2d); border-bottom: 3px solid #7f1a2c; display: flex; align-items: center; padding-left: 12px; }
.logo { width: 32px; height: 32px; background: #d6d8d6; border: 1px solid #8e908e; display: flex; align-items: center; justify-content: center; margin-right: 18px; }
.crumbs { margin-left: 4px; width: 538px; height: 26px; background: #fff; border: 1px solid #999; display: flex; align-items: center; padding-left: 23px; gap: 7px; }
.crumbs i { border-left: 4px solid #000; border-top: 3.500px solid transparent; border-bottom: 3.500px solid transparent; }
.wbody { height: 410px; flex: none; background: #dce6e7; display: flex; padding: 8px 4px; }
.side { width: 209px; }
.shead { height: 24px; background: linear-gradient(#758a98, #50636f); color: #fff; display: flex; align-items: center; padding: 0 7px 0 8px; gap: 10px; font-size: 12px; letter-spacing: -.2px; }
.shead b { flex: 1; }
.sbody { height: 349px; padding: 3px 2px; background: #fff; border: 1px solid #a2a9a9; border-top: 0; }
.list { height: 344px; border: 1px solid #828790; display: flex; overflow: hidden; }
.tree { flex: 1; padding-left: 21px; }
.tree p { margin: 0; height: 16px; line-height: 16px; position: relative; white-space: nowrap; }
.tree .cut { margin-top: -12px; }
.tree .in { padding-left: 19px; }
.tree .gap { margin-top: 10px; }
.tree .ar::before { content: ""; position: absolute; left: -11px; top: 4px; width: 5px; height: 8px; background: #999; clip-path: polygon(0 0, 100% 50%, 0 100%, 0 0, 20% 20%, 20% 80%, 80% 50%, 20% 20%); }
.sel { background: #f3f3f5; }
.sb { width: 17px; background: #f2f2f2; display: flex; flex-direction: column; align-items: center; padding-top: 7px; }
.sb i { width: 17px; height: 211px; background: #cdd1cd; margin-top: 59px; margin-bottom: 48px; }
.stabs { display: flex; height: 22px; align-items: flex-start; text-align: center; letter-spacing: -.45px; }
.stabs span { background: #f0f1ee; border: 1px solid #a5acac; height: 20px; line-height: 20px; margin-top: 1px; }
.stabs .on { width: 41px; height: 23px; line-height: 23px; background: #fff; border-top: 0; margin-top: -1px; letter-spacing: -.2px; }
.t2 { width: 74px; } .t3 { width: 84px; }
.filters { width: 24px; height: 300px; margin-left: 6px; background: linear-gradient(90deg, #50646f, #748b9a); display: flex; flex-direction: column; justify-content: space-between; align-items: center; padding: 8px 0 3px; color: #fff; }
.filters b { writing-mode: vertical-rl; font-size: 12px; line-height: 15px; margin-right: 1px; }
.grid { width: 423px; height: 394px; margin-left: 8px; background: #fff; border: 1px solid #848f90; }
.find { display: flex; padding: 6px 0 0 8px; height: 32px; }
.search { width: 364px; flex: none; height: 27px; background: #eee; border-top: 1px solid #aaa; display: flex; align-items: center; justify-content: space-between; padding: 0 6px; color: #9b9b9b; letter-spacing: -.2px; }
.search em { font-style: italic; }
.find > b { width: 52px; text-align: center; font-size: 8.500px; line-height: 11px; padding-top: 3px; letter-spacing: -.2px; }
.opts { display: flex; align-items: center; height: 35px; padding: 6px 0 6px 8px; color: #aaa; border-bottom: 2px solid #7f8989; letter-spacing: -.2px; }
.combo { width: 100px; height: 22px; border: 1px solid #a8adad; background: #efefef; color: #000; display: flex; align-items: center; justify-content: space-between; padding: 0 5px; }
.clear { width: 110px; height: 22px; margin-left: 10px; border: 1px solid #9fb0ab; color: #808080; font-weight: bold; font-size: 10px; line-height: 21px; text-align: center; background: #f9fcfa; letter-spacing: -.25px; }
.prev { margin-left: 113px; } .next { margin-left: 15px; }
.table { height: 299px; display: flex; border-bottom: 1px solid #848f90; }
.cols { width: 404px; display: flex; flex-direction: column; overflow: hidden; }
.th { height: 34px; flex: none; display: flex; background: linear-gradient(#fff 45%, #f6f6f6 45%); border-bottom: 1px solid #ddd; }
.c1 { width: 202px; border-right: 2px solid #ddd; padding: 20px 4px; flex: none; }
.c2 { flex: 1; display: flex; justify-content: space-between; padding: 4px 24px 0 2px; line-height: 16px; }
.c2 svg { margin-top: 16px; }
.tr { height: 26px; flex: none; display: flex; line-height: 26px; white-space: nowrap; }
.tr > div:first-child { width: 203px; flex: none; text-indent: -3px; overflow: hidden; letter-spacing: -.27px; }
.r1 { background: linear-gradient(#f4fbff, #d9f1fd); border: 1px solid #dbe4e8; border-left: 0; border-radius: 3px; line-height: 24px; }
.r2 { background: #f7f7f7; line-height: 27px; }
.hs { margin-top: auto; height: 17px; flex: none; background: #eef2ef; display: flex; align-items: center; padding: 0 7px; }
.hs i { width: 38px; height: 14px; margin: 0 auto 0 38px; border: 1px solid #888; border-radius: 2px; background: linear-gradient(#fff, #cfcfcf); text-align: center; font: bold 9px/12px "Liberation Sans", sans-serif; letter-spacing: .5px; color: #444; }
.vs { width: 17px; height: 281px; background: #f5faf6; display: flex; flex-direction: column; align-items: center; justify-content: space-between; padding: 7px 0; }
.foot { display: flex; align-items: center; justify-content: flex-end; height: 26px; padding-right: 6px; }
.foot u { color: #00f; margin: 0 28px 0 4px; }
.foot span { color: #555f70; margin-right: 13px; }
.wtask { height: 40px; flex: none; background: linear-gradient(90deg, #040b14, #020e1a 45%, #001f33 80%, #001426); display: flex; }
.wtask div { width: 51px; display: flex; align-items: center; justify-content: center; }
.wtask .start { padding-right: 3px; }
.wtask .cur { width: 48px; background: #3c4147; border-bottom: 2px solid #76b9ed; }
.wtask .exp { width: 40px; margin-left: 5px; border-bottom: 2px solid #76b9ed; }
.thm { height: 38px; flex: none; background: #1c2438; display: flex; align-items: center; padding-left: 17px; color: #eceef4; font-family: "Noto Sans CJK SC", sans-serif; letter-spacing: 0; }
.thm svg:nth-child(2) { margin-left: 22px; } .thm svg:nth-child(3) { margin-left: 22px; } .thm svg:nth-child(4) { margin-left: 22px; } .thm svg:nth-child(5) { margin-left: 24px; }
.host { width: 140px; height: 33px; line-height: 31px; border: 1px solid #3c465e; border-radius: 6px; background: #151c2c; text-align: center; margin-left: 20px; font-size: 13px; }
.time { margin-left: auto; margin-right: 17px; font-size: 15.700px; }

footer { height: 30px; flex: none; position: relative; display: flex; align-items: center; background: #1e2029; border-top: 1px solid #14151b; font-size: 14.500px; letter-spacing: .4px; word-spacing: 3px; box-shadow: 0 0 10px rgba(0,0,0,.35); }
footer > svg { position: relative; margin: 0 7px 0 2px; }
footer > svg + svg { margin: 0 0 0 -2px; }
.item { position: relative; height: 29px; display: flex; align-items: center; gap: 11px; width: 200px; flex: none; padding-left: 5px; }
.item.cur { border-bottom: 2px solid #a504a5; margin-left: 1px; }
.item.dim { background: #2a2b34; color: #a5a6ab; padding-left: 4px; }
.item.docs { gap: 6px; padding-left: 4px; letter-spacing: .95px; }
.item.thunar { gap: 9px; padding-left: 4px; letter-spacing: .55px; }
.dim svg { opacity: .6; }
.art { position: absolute; top: 0; font: bold 11px/11px "DejaVu Sans Mono", monospace; letter-spacing: 0; word-spacing: 0; opacity: .4; }
.a1 { left: 10px; top: 3px; color: #8b1b25; } .a2 { left: 318px; top: 0; color: #888; } .a3 { left: 518px; top: 2px; color: #5b2a7a; } .a4 { left: 844px; top: -5px; color: #8b1b35; } .a5 { left: 1034px; top: 0; color: #2b6860; } .a6 { left: 850px; top: 4px; color: #77591f; }
.ws { margin-left: auto; display: flex; width: 160px; height: 29px; background: #2a2b34; }
.ws i { width: 54px; border-right: 1px solid #45464e; display: flex; align-items: center; justify-content: center; }
.ws .on { width: 52px; background: #4a4a4a; border: 1px solid #fff; }
```
